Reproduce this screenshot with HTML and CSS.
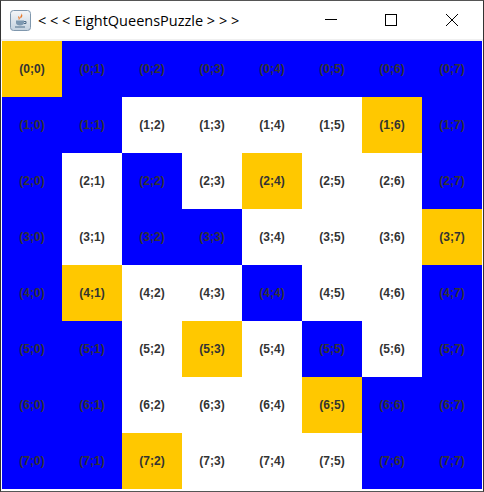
FILE: index.html
```html
<!DOCTYPE html>
<html lang="en">
<head>
    <meta charset="UTF-8">
    <title>EightQueensPuzzle</title>
    <link rel="stylesheet" href="styles.css">
</head>
<body>
    <div class="window">
        <header class="titlebar">
            <svg class="app-icon" width="21" height="21" viewBox="0 0 21 21">
                <defs>
                    <linearGradient id="iconBg" x1="0" y1="0" x2="0" y2="1">
                        <stop offset="0" stop-color="#f4f6f8"/>
                        <stop offset="1" stop-color="#c4d2df"/>
                    </linearGradient>
                </defs>
                <rect x="0.5" y="0.5" width="20" height="20" rx="3" fill="url(#iconBg)" stroke="#7f97ad"/>
                <path d="M11 3c1.500 2-1.500 3-.5 5.500 1.500-1 3-3 .5-5.500zM8.500 6c-1 2 1 2.500 0 4 2-.5 1.500-3 0-4z" fill="#e8792b"/>
                <path d="M6 10.500h8v2.500c0 1.500-1.800 2.500-4 2.500S6 14.500 6 13z" fill="#7d98b0"/>
                <path d="M14 11.500h2v2h-2M5 17h10" fill="none" stroke="#4c6c88"/>
            </svg>
            <span class="title">&lt; &lt; &lt; EightQueensPuzzle &gt; &gt; &gt;</span>
            <div class="controls">
                <svg class="control" width="12" height="12" viewBox="0 0 12 12"><path d="M0 5.500h12" stroke="#000" fill="none"/></svg>
                <svg class="control" width="12" height="12" viewBox="0 0 12 12"><rect x="0.500" y="0.500" width="11" height="11" fill="none" stroke="#000"/></svg>
                <svg class="control close" width="12" height="12" viewBox="0 0 12 12"><path d="M0 0l12 12M12 0L0 12" stroke="#000" fill="none"/></svg>
            </div>
        </header>
        <main class="board">
            <div class="cell queen">(0;0)</div><div class="cell hit">(0;1)</div><div class="cell hit">(0;2)</div><div class="cell hit">(0;3)</div><div class="cell hit">(0;4)</div><div class="cell hit">(0;5)</div><div class="cell hit">(0;6)</div><div class="cell hit">(0;7)</div>
            <div class="cell hit">(1;0)</div><div class="cell hit">(1;1)</div><div class="cell">(1;2)</div><div class="cell">(1;3)</div><div class="cell">(1;4)</div><div class="cell">(1;5)</div><div class="cell queen">(1;6)</div><div class="cell hit">(1;7)</div>
            <div class="cell hit">(2;0)</div><div class="cell">(2;1)</div><div class="cell hit">(2;2)</div><div class="cell">(2;3)</div><div class="cell queen">(2;4)</div><div class="cell">(2;5)</div><div class="cell">(2;6)</div><div class="cell hit">(2;7)</div>
            <div class="cell hit">(3;0)</div><div class="cell">(3;1)</div><div class="cell hit">(3;2)</div><div class="cell hit">(3;3)</div><div class="cell">(3;4)</div><div class="cell">(3;5)</div><div class="cell">(3;6)</div><div class="cell queen">(3;7)</div>
            <div class="cell hit">(4;0)</div><div class="cell queen">(4;1)</div><div class="cell">(4;2)</div><div class="cell">(4;3)</div><div class="cell hit">(4;4)</div><div class="cell">(4;5)</div><div class="cell">(4;6)</div><div class="cell hit">(4;7)</div>
            <div class="cell hit">(5;0)</div><div class="cell hit">(5;1)</div><div class="cell">(5;2)</div><div class="cell queen">(5;3)</div><div class="cell">(5;4)</div><div class="cell hit">(5;5)</div><div class="cell">(5;6)</div><div class="cell hit">(5;7)</div>
            <div class="cell hit">(6;0)</div><div class="cell hit">(6;1)</div><div class="cell">(6;2)</div><div class="cell">(6;3)</div><div class="cell">(6;4)</div><div class="cell queen">(6;5)</div><div class="cell hit">(6;6)</div><div class="cell hit">(6;7)</div>
            <div class="cell hit">(7;0)</div><div class="cell hit">(7;1)</div><div class="cell queen">(7;2)</div><div class="cell">(7;3)</div><div class="cell">(7;4)</div><div class="cell">(7;5)</div><div class="cell hit">(7;6)</div><div class="cell hit">(7;7)</div>
        </main>
    </div>
</body>
</html>
```

FILE: styles.css
```css
html, body {
    margin: 0;
    padding: 0;
}
.window {
    width: 484px;
    height: 492px;
    box-sizing: border-box;
    border: 1px solid #555;
    border-left-color: #333;
    border-right-color: #333;
    background-color: #fff;
    display: flex;
    flex-direction: column;
}
.titlebar {
    height: 38px;
    display: flex;
    align-items: center;
    padding-left: 9px;
    border-bottom: 2px solid #f0f0f0;
    font-family: "Open Sans", sans-serif;
    font-size: 14.5px;
    color: #000;
}
.app-icon {
    flex: none;
}
.title {
    margin-left: 7px;
    white-space: nowrap;
}
.controls {
    margin-left: auto;
    display: flex;
    gap: 48px;
    padding-right: 25px;
}
.control {
    width: 12px;
    height: 12px;
}
.close {
    margin-left: 1px;
}
.board {
    display: grid;
    grid-template-columns: repeat(8, 60px);
    grid-template-rows: repeat(8, 56px);
    margin-left: 1px;
}
.cell {
    display: flex;
    align-items: center;
    justify-content: center;
    font-family: "Liberation Sans", Arial, sans-serif;
    font-size: 12px;
    font-weight: bold;
    color: #333;
    background-color: #fff;
}
.hit {
    background-color: #00f;
}
.queen {
    background-color: #ffc800;
}
```
